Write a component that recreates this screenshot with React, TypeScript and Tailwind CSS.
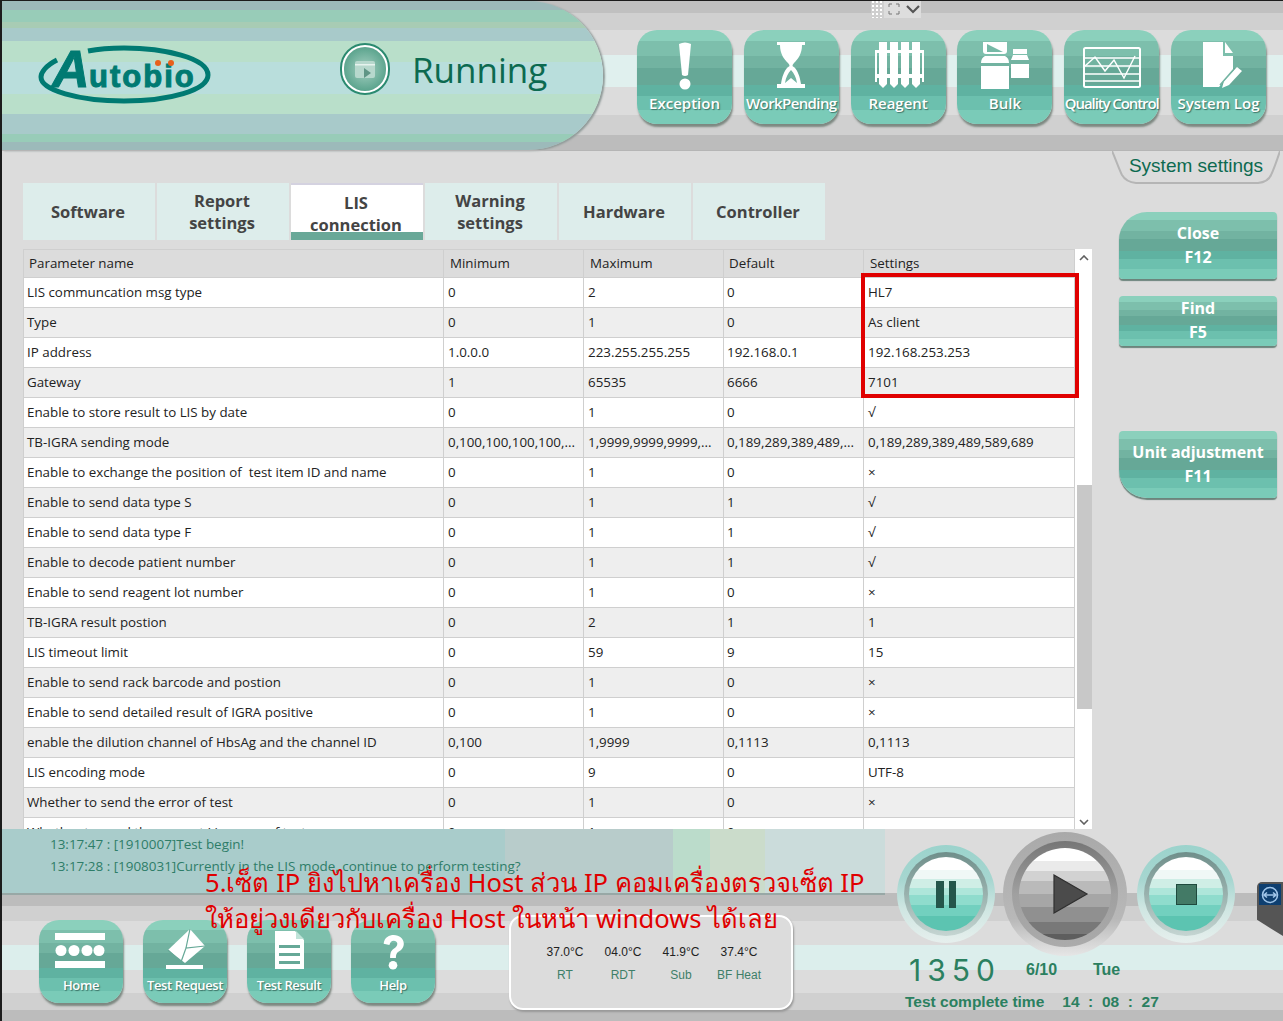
import React from 'react';

const tealStripes =
  'bg-[linear-gradient(#8bd0bc_0_12%,#7dbfac_12%_28%,#72b3a1_28%_40%,#66a897_40%_58%,#5fb2a1_58%_70%,#6cc0ae_70%_85%,#7acbb8_85%)]';
const navButton = `flex flex-col items-center rounded-[20px] text-white shadow-[1px_3px_2px_rgba(90,105,95,0.7)] [text-shadow:1px_1px_1px_rgba(40,80,70,0.7)] ${tealStripes}`;
const sideButton = `flex flex-col items-center justify-center w-[158px] pb-[2px] text-white text-[16px] leading-[24px] font-bold rounded-[4px] shadow-[0_2px_1px_rgba(80,110,100,0.8)] ${tealStripes}`;

const tabs = [
  ['Software'],
  ['Report', 'settings'],
  ['LIS', 'connection'],
  ['Warning', 'settings'],
  ['Hardware'],
  ['Controller'],
];

const rows = [
  ['LIS communcation msg type', '0', '2', '0', 'HL7'],
  ['Type', '0', '1', '0', 'As client'],
  ['IP address', '1.0.0.0', '223.255.255.255', '192.168.0.1', '192.168.253.253'],
  ['Gateway', '1', '65535', '6666', '7101'],
  ['Enable to store result to LIS by date', '0', '1', '0', '√'],
  ['TB-IGRA sending mode', '0,100,100,100,100,...', '1,9999,9999,9999,...', '0,189,289,389,489,...', '0,189,289,389,489,589,689'],
  ['Enable to exchange the position of  test item ID and name', '0', '1', '0', '×'],
  ['Enable to send data type S', '0', '1', '1', '√'],
  ['Enable to send data type F', '0', '1', '1', '√'],
  ['Enable to decode patient number', '0', '1', '1', '√'],
  ['Enable to send reagent lot number', '0', '1', '0', '×'],
  ['TB-IGRA result postion', '0', '2', '1', '1'],
  ['LIS timeout limit', '0', '59', '9', '15'],
  ['Enable to send rack barcode and postion', '0', '1', '0', '×'],
  ['Enable to send detailed result of IGRA positive', '0', '1', '0', '×'],
  ['enable the dilution channel of HbsAg and the channel ID', '0,100', '1,9999', '0,1113', '0,1113'],
  ['LIS encoding mode', '0', '9', '0', 'UTF-8'],
  ['Whether to send the error of test', '0', '1', '0', '×'],
  ['Whether to send the current Lis name of test', '0', '1', '0', '×'],
];

const temps = [
  ['37.0°C', 'RT'],
  ['04.0°C', 'RDT'],
  ['41.9°C', 'Sub'],
  ['37.4°C', 'BF Heat'],
];

const cols = ['w-[420px]', 'w-[140px]', 'w-[140px]', 'w-[140px]', 'w-[211px]'];

const ExclaimIcon = () => (
  <svg width="60" height="50" viewBox="0 0 60 50" fill="#fff">
    <path d="M24 3q6-3 12 0l-3 31q-3 2-6 0z" />
    <circle cx="30" cy="43" r="5.5" />
  </svg>
);

const HourglassIcon = () => (
  <svg width="60" height="50" viewBox="0 0 60 50" fill="#fff">
    <path d="M16 1h28v3h-3c0 9-4 14-8 18q-3 3 0 4c4 4 6 10 7 17h4v4H16v-4h4c1-7 3-13 7-17q3-1 0-4C23 18 19 13 19 4h-3z" />
    <path d="M24 42c1-6 3-10 6-13 3 3 5 7 6 13l-6-5z" fill="#72b3a1" />
  </svg>
);

const ReagentIcon = () => (
  <svg width="60" height="50" viewBox="0 0 60 50" fill="#fff">
    <path d="M11 1h8v42l-4 4-4-4zM22 1h8v42l-4 4-4-4zM33 1h8v42l-4 4-4-4zM44 1h8v42l-4 4-4-4z" />
    <rect x="7" y="9" width="49" height="3" />
    <rect x="7" y="33" width="49" height="4" />
    <rect x="7" y="9" width="2" height="32" />
    <rect x="54" y="9" width="2" height="32" />
  </svg>
);

const BulkIcon = () => (
  <svg width="60" height="50" viewBox="0 0 60 50" fill="#fff">
    <path d="M8 1h24v9q0 3-3 3H11q-3 0-3-3z" />
    <path d="M12 3l16 8H12z" fill="#76b9a6" />
    <path d="M10 15h20q4 2 4 7H6q0-5 4-7z" />
    <rect x="6" y="25" width="28" height="23" />
    <rect x="38" y="8" width="14" height="5" />
    <path d="M38 14h14l2 5H36z" />
    <rect x="36" y="23" width="18" height="14" />
  </svg>
);

const QualityIcon = () => (
  <svg width="60" height="50" viewBox="0 0 60 50" fill="none" stroke="#fff">
    <rect x="2" y="7" width="56" height="39" rx="1.5" strokeWidth="2" />
    <path d="M3 17h54M3 25h54M3 33h54M3 40h54" strokeWidth="1.5" />
    <path d="M3 25l10-9 10 14 9-11 10 18 11-22" strokeWidth="1.5" />
  </svg>
);

const LogIcon = () => (
  <svg width="60" height="50" viewBox="0 0 60 50" fill="#fff">
    <path d="M15 1h20v14h10v14L31 46H15z" />
    <path d="M37 1l8 11h-8z" />
    <path d="M34 47l2-7 13-14 5 4-13 14z" />
    <path d="M32 44l14-16" stroke="#72b3a1" strokeWidth="1.5" />
  </svg>
);

const HomeIcon = () => (
  <svg width="60" height="50" viewBox="0 0 60 50" fill="#fff">
    <rect x="4" y="6" width="50" height="7" />
    <rect x="4" y="34" width="50" height="7" />
    <circle cx="10" cy="23.5" r="5.5" />
    <circle cx="23" cy="23.5" r="5.5" />
    <circle cx="36" cy="23.5" r="5.5" />
    <circle cx="48" cy="23.5" r="5.5" />
  </svg>
);

const RequestIcon = () => (
  <svg width="60" height="50" viewBox="0 0 60 50" fill="#fff">
    <path d="M35 2l15 17-20 17-17-13z" />
    <path d="M35 2l-4 19 19-2M31 21l-5 14M13 23l11 10" fill="none" stroke="#66a897" strokeWidth="1.2" />
    <rect x="11" y="38" width="37" height="4" />
  </svg>
);

const ResultIcon = () => (
  <svg width="60" height="50" viewBox="0 0 60 50" fill="#fff">
    <path d="M16 4h20l9 9v29H16z" />
    <path d="M37 4l8 8h-8z" fill="#bfe3d8" />
    <path d="M20 18h21v3H20zM20 26h21v3H20zM20 34h21v3H20z" fill="#66a897" />
  </svg>
);

const HelpIcon = () => (
  <svg width="60" height="50" viewBox="0 0 60 50" fill="#fff">
    <g transform="translate(8.4 8) scale(0.72)">
      <path d="M17 12C18 3 25 0 31 0c8 0 14 5 14 12 0 6-4 9-7 11-3 2-4 4-4 9h-8c0-7 1-10 5-13 3-2 5-4 5-7 0-2-2-4-5-4s-5 2-6 6z" />
      <circle cx="30" cy="42" r="6" />
    </g>
  </svg>
);

const topNav = [
  { label: 'Exception', icon: <ExclaimIcon />, tight: '' },
  { label: 'WorkPending', icon: <HourglassIcon />, tight: 'tracking-[-0.6px]' },
  { label: 'Reagent', icon: <ReagentIcon />, tight: '' },
  { label: 'Bulk', icon: <BulkIcon />, tight: '' },
  { label: 'Quality Control', icon: <QualityIcon />, tight: 'tracking-[-1.1px]' },
  { label: 'System Log', icon: <LogIcon />, tight: '' },
];

const bottomNav = [
  { label: 'Home', icon: <HomeIcon /> },
  { label: 'Test Request', icon: <RequestIcon /> },
  { label: 'Test Result', icon: <ResultIcon /> },
  { label: 'Help', icon: <HelpIcon /> },
];

const Logo = () => (
  <svg width="174" height="60" viewBox="0 0 174 60" className="shrink-0 overflow-visible">
    <path d="M18 16C6 22 2 29 2 33c0 13 37 24 83 24s84-11 84-26C169 14 125 4 85 4c-14 0-26 1-36 3" fill="none" stroke="#007a72" strokeWidth="5" />
    <text x="13" y="43" fontFamily="'Liberation Sans', sans-serif" fontSize="52" fontWeight="700" fontStyle="italic" fill="#007a72" stroke="#007a72" strokeWidth="1">A</text>
    <text x="50" y="43" fontFamily="'Liberation Sans', sans-serif" fontSize="31" fontWeight="700" fill="#007a72" stroke="#007a72" strokeWidth="1" letterSpacing="2">utobio</text>
    <circle cx="119" cy="19" r="3" fill="#e8601c" />
    <circle cx="132" cy="19" r="3" fill="#e8601c" />
  </svg>
);

const RunningIcon = () => (
  <div className="w-[50px] h-[52px] rounded-full border-2 border-[#2b8a70] flex items-center justify-center bg-white">
    <div className="w-[42px] h-[44px] rounded-full bg-[radial-gradient(circle,#a6d0c2,#3e9379)] flex items-center justify-center">
      <svg width="22" height="22" viewBox="0 0 22 22">
        <rect x="1" y="3" width="20" height="17" rx="2" fill="#b7d8cd" />
        <rect x="1" y="6" width="20" height="1.5" fill="#e6f3ee" />
        <path d="M10 10l7 5-7 5z" fill="#5f9585" />
      </svg>
    </div>
  </div>
);

const RoundButton = ({ children }: { children: React.ReactNode }) => (
  <div className="w-[98px] h-[98px] rounded-full bg-[linear-gradient(#9bd3cc,#a6d6d0_35%,#cfe6e2_65%,#e6efed)] flex items-center justify-center">
    <div className="w-[84px] h-[84px] rounded-full bg-[linear-gradient(#6f8e8a,#9db5b1_55%,#c5d5d2)] flex items-center justify-center">
      <div className="w-[74px] h-[74px] rounded-full bg-[linear-gradient(#ffffff_0_18%,#f0f8f6_18%_30%,#cfeee6_30%_42%,#aee6da_42%_52%,#8fdccd_52%_65%,#72d0bf_65%_80%,#5cc4b1_80%)] flex items-center justify-center">
        {children}
      </div>
    </div>
  </div>
);

const PlayButton = () => (
  <div className="w-[124px] h-[124px] rounded-full bg-[linear-gradient(#a9a9a9,#b8b8b8_70%,#e6e6e6)] flex items-center justify-center">
    <div className="w-[106px] h-[106px] rounded-full bg-[linear-gradient(#767676,#a0a0a0_50%,#ababab)] flex items-center justify-center">
      <div className="w-[92px] h-[92px] rounded-full flex items-center justify-center bg-[linear-gradient(#ffffff_0_14%,#eaeaea_14%_25%,#d2d2d2_25%_36%,#bababa_36%_50%,#a6a6a6_50%_64%,#909090_64%_80%,#787878_80%_94%,#5e5e5e_94%)]">
        <svg width="36" height="40" viewBox="0 0 36 40" className="ml-[11px]">
          <path d="M1 1l33 19L1 39z" fill="#4b4b4b" stroke="#2f2f2f" strokeWidth="1.2" />
        </svg>
      </div>
    </div>
  </div>
);

export default function App() {
  return (
    <div className="relative flex flex-col w-[1283px] h-[1021px] overflow-hidden border-t border-l-2 border-[#1c1c1c] bg-[#dcdcdc] font-['Open_Sans',sans-serif]">
      {/* header */}
      <header className="flex h-[149px] shrink-0 bg-[linear-gradient(#c0c0c0_0_12px,#d0d0d0_12px_29px,#dcdcdc_29px_54px,#e0f0ee_54px_86px,#dcdcdc_86px_114px,#d0d0d0_114px_134px,#bcbcbc_134px)]">
        <div className="flex items-center w-[601px] h-[149px] pl-[37px] pb-[4px] rounded-r-[76px] shadow-[2px_1px_2px_#8f9a98] bg-[linear-gradient(#9cbaba_0_9px,#98ccb8_9px_21px,#a8ccb4_21px_27px,#a8caca_27px_40px,#b9dfca_40px_61px,#b9dedc_61px_93px,#b9dfca_93px_113px,#a8caca_113px_133px,#98ccb8_133px_141px,#9cbaba_141px)]">
          <Logo />
          <div className="ml-[127px] -mt-[9px]">
            <RunningIcon />
          </div>
          <span className="ml-[22px] -mt-[9px] text-[35px] leading-none text-[#0c6a50]">Running</span>
        </div>
        <nav className="flex gap-[11.8px] ml-[34px] pt-[29px]">
          {topNav.map((b) => (
            <div key={b.label} className={`${navButton} w-[95px] h-[94px] pt-[11px]`}>
              {b.icon}
              <span className={`mt-[2px] text-[15px] leading-[20px] font-semibold whitespace-nowrap ${b.tight}`}>{b.label}</span>
            </div>
          ))}
        </nav>
      </header>

      {/* page title tab */}
      <div className="flex justify-end h-[33px] shrink-0 pr-[3px] border-t border-[#b5b5b5]">
        <div className="relative w-[168px] h-[36px] flex items-center justify-center pb-[6px]">
          <svg width="168" height="36" viewBox="0 0 168 36" className="absolute inset-0" fill="none">
            <path d="M0 0c4 9 7 18 10 24q4 7 14 8h122q10-1 13-8c3-6 6-15 9-24" stroke="#b5b5b5" strokeWidth="2" />
          </svg>
          <span className="relative text-[19px] font-['Liberation_Sans',sans-serif] text-[#0c6a50]">System settings</span>
        </div>
      </div>

      {/* main */}
      <main className="flex pl-[21px] h-[646px] shrink-0">
        <div className="flex flex-col w-[1069px]">
          <div className="flex gap-[2px] h-[57px]">
            {tabs.map((t, i) => (
              <div
                key={t.join(' ')}
                className={`relative flex flex-col items-center justify-center w-[132px] pr-[2px] text-[16.5px] leading-[22px] font-bold text-[#444] ${
                  i === 2 ? 'bg-white border-t-2 border-[#d4d2e0] pt-[3px]' : 'bg-[#ddedeb]'
                }`}
              >
                {t.map((line) => (
                  <span key={line}>{line}</span>
                ))}
                {i === 2 && <div className="absolute left-0 right-0 bottom-0 h-[8px] bg-[#69a898]" />}
              </div>
            ))}
          </div>
          <div className="flex mt-[9px] h-[580px] overflow-hidden">
            <table className="table-fixed border-collapse w-[1051px] h-fit text-[13.35px] text-[#222]">
              <thead>
                <tr className="h-[28px] bg-[#dcdcdc]">
                  {['Parameter name', 'Minimum', 'Maximum', 'Default', 'Settings'].map((h, i) => (
                    <th key={h} className={`${cols[i]} border border-[#cfcfcf] ${i === 0 || i === 3 ? 'pl-[5px]' : 'pl-[6px]'} text-left font-normal`}>
                      {h}
                    </th>
                  ))}
                </tr>
              </thead>
              <tbody>
                {rows.map((r, i) => (
                  <tr key={r[0]} className={`h-[30px] ${i % 2 === 0 ? 'bg-white' : 'bg-[#eeeeee]'}`}>
                    {r.map((c, j) => (
                      <td key={j} className={`border border-[#cfcfcf] ${j === 0 || j === 3 ? 'pl-[3px]' : 'pl-[4px]'} whitespace-pre overflow-hidden`}>
                        {c}
                      </td>
                    ))}
                  </tr>
                ))}
              </tbody>
            </table>
            <div className="flex flex-col items-center w-[18px] h-[580px] shrink-0 bg-white">
              <svg width="10" height="6" viewBox="0 0 10 6" className="mt-[6px]">
                <path d="M1 5l4-4 4 4" fill="none" stroke="#606060" strokeWidth="1.6" />
              </svg>
              <div className="w-[15px] h-[224px] mt-[224px] bg-[#c8c8c8]" />
              <svg width="10" height="6" viewBox="0 0 10 6" className="mt-[110px]">
                <path d="M1 1l4 4 4-4" fill="none" stroke="#606060" strokeWidth="1.6" />
              </svg>
            </div>
          </div>
        </div>
        <aside className="flex flex-col ml-[27px] pt-[29px]">
          <button className={`${sideButton} h-[67px] rounded-tl-[28px]`}>
            <span>Close</span>
            <span>F12</span>
          </button>
          <button className={`${sideButton} h-[50px] mt-[17px]`}>
            <span>Find</span>
            <span>F5</span>
          </button>
          <button className={`${sideButton} h-[67px] mt-[85px] rounded-bl-[28px]`}>
            <span>Unit adjustment</span>
            <span>F11</span>
          </button>
        </aside>
      </main>

      {/* bottom */}
      <footer className="flex h-[192px] shrink-0 bg-[linear-gradient(#dcdcdc_0_64px,#bcbcbc_64px_77px,#d0d0d0_77px_92px,#dcdcdc_92px_116px,#dceeec_116px_141px,#dcdcdc_141px_164px,#d0d0d0_164px_181px,#bcbcbc_181px)]">
        <div className="flex flex-col w-[883px] shrink-0">
          <div className="h-[66px] pl-[48px] pt-[4px] text-[13.45px] leading-[22px] text-[#2e7d68] border-b-2 border-[#98a8a6] bg-[linear-gradient(90deg,#a9cccb_0_503px,#b8cccb_503px_671px,#bbdccb_671px_708px,#cbdccb_708px_763px,#cbdcdb_763px)]">
            <div>13:17:47 : [1910007]Test begin!</div>
            <div>13:17:28 : [1908031]Currently in the LIS mode, continue to perform testing?</div>
          </div>
          <div className="flex items-start pl-[37px] pt-[25px]">
            <div className="flex gap-[20px]">
              {bottomNav.map((b) => (
                <div key={b.label} className={`${navButton} w-[84px] h-[83px] pt-[7px]`}>
                  {b.icon}
                  <span className="-mt-[1px] text-[13px] leading-[18px] font-semibold tracking-[-0.4px] whitespace-nowrap">{b.label}</span>
                </div>
              ))}
            </div>
            <div className="flex justify-center gap-[1px] w-[284px] h-[95px] ml-[74px] -mt-[5px] pt-[26px] pl-[2px] rounded-[14px] border-2 border-white bg-[#dcdcdc] shadow-[1px_2px_2px_#999] font-['Liberation_Sans',sans-serif] text-[12px]">
              {temps.map(([v, l]) => (
                <div key={l} className="flex flex-col items-center w-[57px]">
                  <span className="h-[23px] text-[#222]">{v}</span>
                  <span className="text-[#3e7f68]">{l}</span>
                </div>
              ))}
            </div>
          </div>
        </div>
        <div className="flex flex-col flex-1 font-['Liberation_Sans',sans-serif] font-bold text-[#2b8060]">
          <div className="flex items-center h-[130px] pl-[12px]">
            <RoundButton>
              <div className="flex gap-[5px]">
                <div className="w-[7.5px] h-[27px] bg-[#24564b]" />
                <div className="w-[7.5px] h-[27px] bg-[#24564b]" />
              </div>
            </RoundButton>
            <div className="ml-[8px] mr-[10px]">
              <PlayButton />
            </div>
            <RoundButton>
              <div className="w-[21px] h-[21px] bg-[#437a66] border border-[#1f4a3e]" />
            </RoundButton>
          </div>
          <div className="flex items-center h-[27px] pl-[24px] -mt-[3px] text-[16px]">
            <span className="w-[117px] text-[30px] leading-none font-normal tracking-[6px] font-['Inter',sans-serif]">1350</span>
            <span className="w-[67px]">6/10</span>
            <span>Tue</span>
          </div>
          <div className="flex mt-[7px] pl-[20px] text-[15.5px] whitespace-pre">
            <span>Test complete time</span>
            <span className="ml-[18px]">14  :  08  :  27</span>
          </div>
        </div>
      </footer>

      {/* annotation over the screen */}
      <div className="absolute left-[859px] top-[272px] w-[218px] h-[125px] border-4 border-[#e00000]" />
      <div className="absolute left-[203px] top-[864px] text-[25.6px] leading-[36px] text-[#e00000] whitespace-nowrap font-['Noto_Sans',sans-serif]">
        <div>5.เซ็ต IP ยิงไปหาเครื่อง Host ส่วน IP คอมเครื่องตรวจเซ็ต IP</div>
        <div>ให้อยู่วงเดียวกับเครื่อง Host ในหน้า windows ได้เลย</div>
      </div>

      {/* remote control widgets */}
      <div className="absolute left-[869px] -top-px flex items-center w-[50px] h-[18px] bg-[#dddddd]">
        <div className="w-[13px] h-full bg-[radial-gradient(#fff_1px,transparent_1px)] bg-[length:4px_4px] bg-[#cfcfcf]" />
        <svg width="16" height="14" viewBox="0 0 16 14" className="ml-[2px]" fill="none" stroke="#777" strokeWidth="1">
          <path d="M3 5V2h3M13 5V2h-3M3 9v3h3M13 9v3h-3" />
        </svg>
        <svg width="16" height="12" viewBox="0 0 16 12" className="ml-[3px]" fill="none" stroke="#555" strokeWidth="2.2">
          <path d="M2 3l6 6 6-6" />
        </svg>
      </div>
      <div className="absolute left-[1255px] top-[881px] flex justify-center pt-[2px] w-[26px] h-[54px] bg-[#555555] rounded-tl-[5px] [clip-path:polygon(0_0,100%_0,100%_100%,0_70%)]">
        <div className="flex items-center justify-center w-[22px] h-[21px] bg-[#0e3f70]">
          <svg width="18" height="18" viewBox="0 0 18 18" fill="none" stroke="#9fc4e8" strokeWidth="1.6">
            <circle cx="9" cy="9" r="7.5" />
            <path d="M3 9h12M6 6.5L3 9l3 2.5M12 6.5L15 9l-3 2.5" />
          </svg>
        </div>
      </div>
    </div>
  );
}
